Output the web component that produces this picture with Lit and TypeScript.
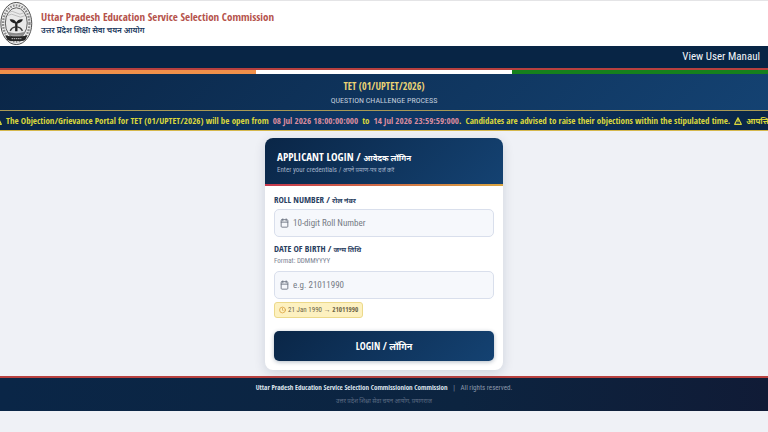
import { LitElement, html, css, svg } from "lit";
import { customElement, property } from "lit/decorators.js";

const calendarIcon = svg`<svg viewBox="0 0 20 24" fill="none" stroke="currentColor" stroke-width="2.200" stroke-linecap="round" stroke-linejoin="round" aria-hidden="true"><rect x="2" y="4" width="16" height="18" rx="2"/><path d="M14 2v5M6 2v5M2 10h16"/></svg>`;
const clockIcon = svg`<svg viewBox="0 0 24 24" fill="none" stroke="currentColor" stroke-width="2.4" stroke-linecap="round" aria-hidden="true"><circle cx="12" cy="12" r="10"/><path d="M12 6v6l3 3"/></svg>`;
const warningIcon = svg`<svg viewBox="0 0 24 24" fill="none" stroke="currentColor" stroke-width="3.500" stroke-linejoin="round" aria-hidden="true"><path d="M12 2L22 22H2Z"/><path d="M12 8v7M12 17v2"/></svg>`;

@customElement("state-seal")
export class StateSeal extends LitElement {
  static styles = css`
    :host { display: block; flex: none; width: 33px; height: 45px; }
    svg { display: block; width: 100%; height: 100%; }
  `;
  render() {
    return html`<svg viewBox="0 0 33 46" role="img" aria-label="Government seal">
      <ellipse cx="16.300" cy="23" rx="15.8" ry="21.5" fill="#f0f0f0" stroke="#4a4a4a" stroke-width="1"/>
      <ellipse cx="16.300" cy="23" rx="13.5" ry="18.6" fill="none" stroke="#8c8c8c" stroke-width="2.4" stroke-dasharray="1.800 1.2"/>
      <ellipse cx="16.300" cy="22.500" rx="11.2" ry="15.6" fill="#e9e9e9" stroke="#4c4c4c" stroke-width=".9"/>
      <path d="M8 12q4-3 8 0t8 0M7 15q4.500-3 9 0t9 0" fill="none" stroke="#b0b0b0" stroke-width=".8"/>
      <path d="M9.500 19c3-.8 5.500.5 6.800 2.700 1.300-2.200 3.800-3.500 6.800-2.700-1.200 2.800-3.200 3.700-5.600 4v8h-2.400v-8c-2.400-.3-4.400-1.200-5.600-4z" fill="#222"/>
      <path d="M10 30.500c1.300-2.500 3-3.700 5.500-4M22.600 30.500c-1.300-2.500-3-3.700-5.500-4" fill="none" stroke="#3a3a3a" stroke-width="1.300"/>
      <path d="M7 31.500q9 3 18.600 0l-2 4H9z" fill="#8a8a8a"/>
      <path d="M5 35q3 1 6 1h10.600q3 0 6-1l-2 4.500q-2 1.500-4 1.500H11q-2 0-4-1.500z" fill="#262626"/>
      <path d="M11.500 38.500h10" stroke="#ccc" stroke-width="1" stroke-dasharray="1.500 .7"/>
    </svg>`;
  }
}

@customElement("login-field")
export class LoginField extends LitElement {
  @property() label = "";
  @property() hindi = "";
  @property() hint = "";
  @property() placeholder = "";

  static styles = css`
    :host { display: block; }
    label { display: block; font: 700 9px/12px "Open Sans Condensed", "Noto Sans", sans-serif; color: #2a405f; }
    label span { font-size: 7px; line-height: 10px; }
    .hint { display: block; font: 7px/13px "Roboto Condensed", "Noto Sans", sans-serif; color: #7b8494; }
    .box {
      display: flex; align-items: center; gap: 4px; height: 28px; padding: 0 5px; margin-top: 3px;
      box-sizing: border-box; border: 1px solid #d9dfec; border-radius: 5px; background: #f6f8fc;
    }
    svg { flex: none; width: 9px; height: 10px; color: #707784; }
    input {
      flex: 1; min-width: 0; padding: 0; border: 0; outline: 0; background: none;
      font: 9px/14px "Roboto Condensed", "Noto Sans", sans-serif; color: #1a3254;
    }
    input::placeholder { color: #757a84; opacity: 1; }
  `;
  render() {
    return html`
      <label for="field">${this.label} / <span>${this.hindi}</span></label>
      ${this.hint ? html`<span class="hint">${this.hint}</span>` : ""}
      <div class="box">${calendarIcon}<input id="field" type="text" placeholder=${this.placeholder}></div>`;
  }
}

@customElement("app-root")
export class AppRoot extends LitElement {
  static styles = css`
    :host {
      --bold: "Open Sans Condensed", "Noto Sans", sans-serif;
      --text: "Roboto Condensed", "Noto Sans", sans-serif;
      display: block; min-height: 100vh; overflow: hidden; background: #eff1f6; font-family: var(--text);
    }
    h1, h2, p { margin: 0; }
    svg { flex: none; }
    .brand { display: flex; gap: 8px; height: 46px; background: #fff; border-top: 1px solid #e4e4e6; box-sizing: border-box; }
    .names { padding-top: 9px; }
    .names h1 { font: 700 11px/14px var(--bold); color: #b5524b; }
    .names p { font: 600 8px/12px var(--bold); color: #1c3a60; }
    nav { display: flex; justify-content: flex-end; align-items: center; height: 22px; padding: 0 8px; background: #082545; border-bottom: 2px solid #b8413f; }
    nav a { font: 11px/16px var(--text); color: #f2f5fa; text-decoration: none; }
    .tricolor { display: grid; grid-template-columns: repeat(3, 1fr); height: 4px; }
    .saffron { background: #f0904a; }
    .white { background: #fff; }
    .green { background: #16801d; }
    .banner { padding: 5px 0 2px; text-align: center; background: linear-gradient(135deg, #0a2647, #144272); }
    .banner h2 { font: 700 10px/14px var(--bold); color: #ecd374; }
    .banner p { font: 8px/15px var(--text); color: #c3cedd; }
    .ticker {
      display: flex; align-items: center; height: 19px; overflow: hidden; white-space: nowrap;
      border-top: 1px solid #a99a55; border-bottom: 1px solid #d5b84e;
      background: linear-gradient(90deg, #0a2647, #0e3766 50%, #0a2647);
      font: 700 9px/14px var(--bold); color: #d9d63c;
    }
    .ticker div { display: flex; align-items: center; gap: 4px; margin-left: -6px; }
    .ticker svg { width: 8px; height: 8px; }
    .ticker b { color: #d98c9e; }
    .ticker .hindi { font-size: 8px; }
    main { display: flex; justify-content: center; padding: 7px 12px 6px; }
    .card { width: 100%; max-width: 238px; border-radius: 8px; overflow: hidden; background: #fff; box-shadow: 0 3px 12px #0a264724; }
    .head { padding: 11px 12px 8px; background: linear-gradient(135deg, #0a2647, #144272); }
    .head h2 { font: 700 11px/16px var(--bold); color: #fff; }
    .head h2 span { font-size: 8px; line-height: 10px; }
    .head p { font: 7px/11px var(--text); color: #a3b3ca; }
    .head p span { font-size: 6px; line-height: 8px; }
    .rule { height: 2px; background: linear-gradient(90deg, #c5384d, #d9a441); }
    form { display: flex; flex-direction: column; padding: 8px 9px 9px; }
    login-field + login-field { margin-top: 6px; }
    .example {
      display: flex; align-items: center; align-self: flex-start; gap: 2px; height: 16px; margin-top: 3px; padding: 0 4px;
      box-sizing: border-box; border: 1px solid #ecd98a; border-radius: 3px; background: #fdf1c0;
      font: 7px/10px var(--text); color: #6d6648;
    }
    .example b { font-family: var(--bold); }
    .example svg { width: 7px; height: 8px; color: #d79b32; }
    button {
      height: 30px; margin-top: 13px; padding: 0; border: 0; border-radius: 5px; cursor: pointer;
      background: linear-gradient(135deg, #0a2647, #144272); box-shadow: 0 1px 4px #0a264750;
      font: 700 10px/14px var(--bold); color: #fff;
    }
    button span { font-size: 9px; line-height: 10px; }
    footer { padding: 4px 0; border-top: 2px solid #b8413f; background: linear-gradient(90deg, #0a2647, #0c2440 60%, #101b36); text-align: center; }
    footer p { font: 7px/12px var(--text); color: #8996a9; }
    footer strong { font: 700 7px/12px var(--bold); color: #dfe5ee; }
    footer .bar { margin: 0 4px; }
    footer .place { font-size: 6px; line-height: 13px; color: #5d6c84; }
  `;
  render() {
    return html`
      <header>
        <div class="brand">
          <state-seal></state-seal>
          <div class="names">
            <h1>Uttar Pradesh Education Service Selection Commission</h1>
            <p>उत्तर प्रदेश शिक्षा सेवा चयन आयोग</p>
          </div>
        </div>
        <nav><a href="#manual">View User Manaul</a></nav>
        <div class="tricolor"><span class="saffron"></span><span class="white"></span><span class="green"></span></div>
        <div class="banner">
          <h2>TET (01/UPTET/2026)</h2>
          <p>QUESTION CHALLENGE PROCESS</p>
        </div>
        <div class="ticker"><div>
          ${warningIcon}
          <span>The Objection/Grievance Portal for TET (01/UPTET/2026) will be open from</span>
          <b>08 Jul 2026 18:00:00:000</b>
          <span>to</span>
          <span><b>14 Jul 2026 23:59:59:000</b>.</span>
          <span>Candidates are advised to raise their objections within the stipulated time.</span>
          ${warningIcon}
          <span class="hindi">आपत्ति</span>
        </div></div>
      </header>
      <main>
        <section class="card">
          <div class="head">
            <h2>APPLICANT LOGIN / <span>आवेदक लॉगिन</span></h2>
            <p>Enter your credentials / <span>अपने प्रमाण-पत्र दर्ज करें</span></p>
          </div>
          <div class="rule"></div>
          <form @submit=${(e: Event) => e.preventDefault()}>
            <login-field label="ROLL NUMBER" hindi="रोल नंबर" placeholder="10-digit Roll Number"></login-field>
            <login-field label="DATE OF BIRTH" hindi="जन्म तिथि" hint="Format: DDMMYYYY" placeholder="e.g. 21011990"></login-field>
            <div class="example">${clockIcon}<span>21 Jan 1990 → <b>21011990</b></span></div>
            <button type="submit">LOGIN / <span>लॉगिन</span></button>
          </form>
        </section>
      </main>
      <footer>
        <p><strong>Uttar Pradesh Education Service Selection Commissionion Commission</strong><span class="bar"> | </span>All rights reserved.</p>
        <p class="place">उत्तर प्रदेश शिक्षा सेवा चयन आयोग, प्रयागराज</p>
      </footer>`;
  }
}
